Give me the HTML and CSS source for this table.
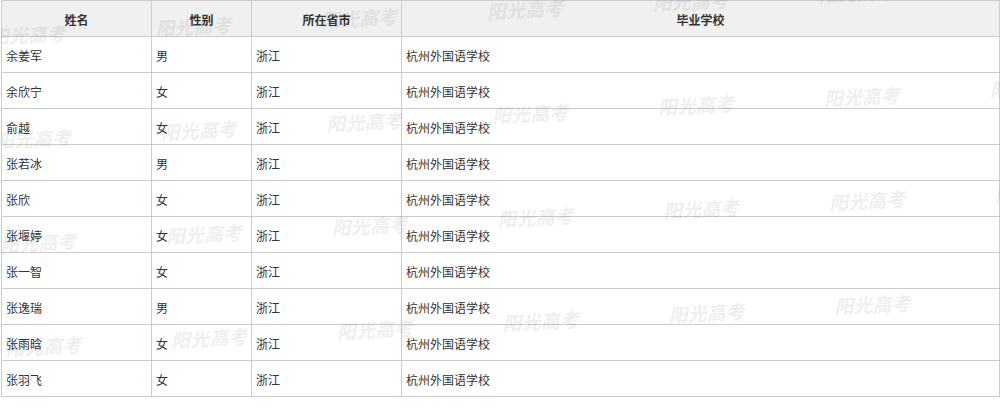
FILE: index.html
```html
<!DOCTYPE html>
<html lang="zh-CN">
<head>
<meta charset="utf-8">
<title>名单</title>
<link rel="stylesheet" href="styles.css">
</head>
<body>
<div class="page">
  <div class="table-wrap">
    <div class="grid" role="table">
      <div class="cell head">姓名</div>
      <div class="cell head">性别</div>
      <div class="cell head">所在省市</div>
      <div class="cell head">毕业学校</div>

      <div class="cell">余姜军</div><div class="cell">男</div><div class="cell">浙江</div><div class="cell">杭州外国语学校</div>
      <div class="cell">余欣宁</div><div class="cell">女</div><div class="cell">浙江</div><div class="cell">杭州外国语学校</div>
      <div class="cell">俞越</div><div class="cell">女</div><div class="cell">浙江</div><div class="cell">杭州外国语学校</div>
      <div class="cell">张若冰</div><div class="cell">男</div><div class="cell">浙江</div><div class="cell">杭州外国语学校</div>
      <div class="cell">张欣</div><div class="cell">女</div><div class="cell">浙江</div><div class="cell">杭州外国语学校</div>
      <div class="cell">张堰婷</div><div class="cell">女</div><div class="cell">浙江</div><div class="cell">杭州外国语学校</div>
      <div class="cell">张一智</div><div class="cell">女</div><div class="cell">浙江</div><div class="cell">杭州外国语学校</div>
      <div class="cell">张逸瑞</div><div class="cell">男</div><div class="cell">浙江</div><div class="cell">杭州外国语学校</div>
      <div class="cell">张雨晗</div><div class="cell">女</div><div class="cell">浙江</div><div class="cell">杭州外国语学校</div>
      <div class="cell">张羽飞</div><div class="cell">女</div><div class="cell">浙江</div><div class="cell">杭州外国语学校</div>
    </div>

    <div class="watermark" aria-hidden="true">
      <div class="wm-row"><span class="wm">阳光高考</span><span class="wm">阳光高考</span><span class="wm">阳光高考</span><span class="wm">阳光高考</span><span class="wm">阳光高考</span><span class="wm">阳光高考</span><span class="wm">阳光高考</span><span class="wm">阳光高考</span></div>
      <div class="wm-row"><span class="wm">阳光高考</span><span class="wm">阳光高考</span><span class="wm">阳光高考</span><span class="wm">阳光高考</span><span class="wm">阳光高考</span><span class="wm">阳光高考</span><span class="wm">阳光高考</span><span class="wm">阳光高考</span></div>
      <div class="wm-row"><span class="wm">阳光高考</span><span class="wm">阳光高考</span><span class="wm">阳光高考</span><span class="wm">阳光高考</span><span class="wm">阳光高考</span><span class="wm">阳光高考</span><span class="wm">阳光高考</span><span class="wm">阳光高考</span></div>
      <div class="wm-row"><span class="wm">阳光高考</span><span class="wm">阳光高考</span><span class="wm">阳光高考</span><span class="wm">阳光高考</span><span class="wm">阳光高考</span><span class="wm">阳光高考</span><span class="wm">阳光高考</span><span class="wm">阳光高考</span></div>
      <div class="wm-row"><span class="wm">阳光高考</span><span class="wm">阳光高考</span><span class="wm">阳光高考</span><span class="wm">阳光高考</span><span class="wm">阳光高考</span><span class="wm">阳光高考</span><span class="wm">阳光高考</span><span class="wm">阳光高考</span></div>
    </div>
  </div>
</div>
</body>
</html>
```

FILE: styles.css
```css
html, body {
  margin: 0;
  padding: 0;
  background: #ffffff;
}

body {
  width: 1000px;
  height: 411px;
  overflow: hidden;
  font-family: "Noto Sans CJK SC", "Liberation Sans", sans-serif;
  font-size: 12px;
  color: #333333;
}

.page {
  width: 1000px;
  height: 411px;
  padding-left: 1px;
  box-sizing: border-box;
}

.table-wrap {
  position: relative;
  width: 999px;
  overflow: hidden;
}

.grid {
  display: grid;
  grid-template-columns: 150px 100px 150px 598px;
  grid-auto-rows: 36px;
  width: 999px;
  box-sizing: border-box;
  border-left: 1px solid #cccccc;
  border-top: 1px solid #cccccc;
}

.cell {
  box-sizing: border-box;
  border-right: 1px solid #cccccc;
  border-bottom: 1px solid #cccccc;
  display: flex;
  align-items: center;
  padding: 2px 0 0 4px;
  line-height: 16px;
  white-space: nowrap;
}

.head {
  background: #f0f0f0;
  justify-content: center;
  padding-left: 0;
  font-weight: bold;
  color: #333333;
}

.watermark {
  position: absolute;
  left: -183px;
  top: -69px;
  width: 1328px;
  transform: rotate(-2.9deg);
  transform-origin: 0 0;
  pointer-events: none;
  display: flex;
  flex-direction: column;
}

.wm-row {
  display: flex;
  height: 104px;
}

.wm {
  flex: 0 0 166px;
  font-family: "Noto Sans CJK SC", sans-serif;
  font-size: 19px;
  line-height: 20px;
  font-weight: 900;
  font-style: italic;
  color: rgba(0, 0, 0, 0.07);
  white-space: nowrap;
}
```
